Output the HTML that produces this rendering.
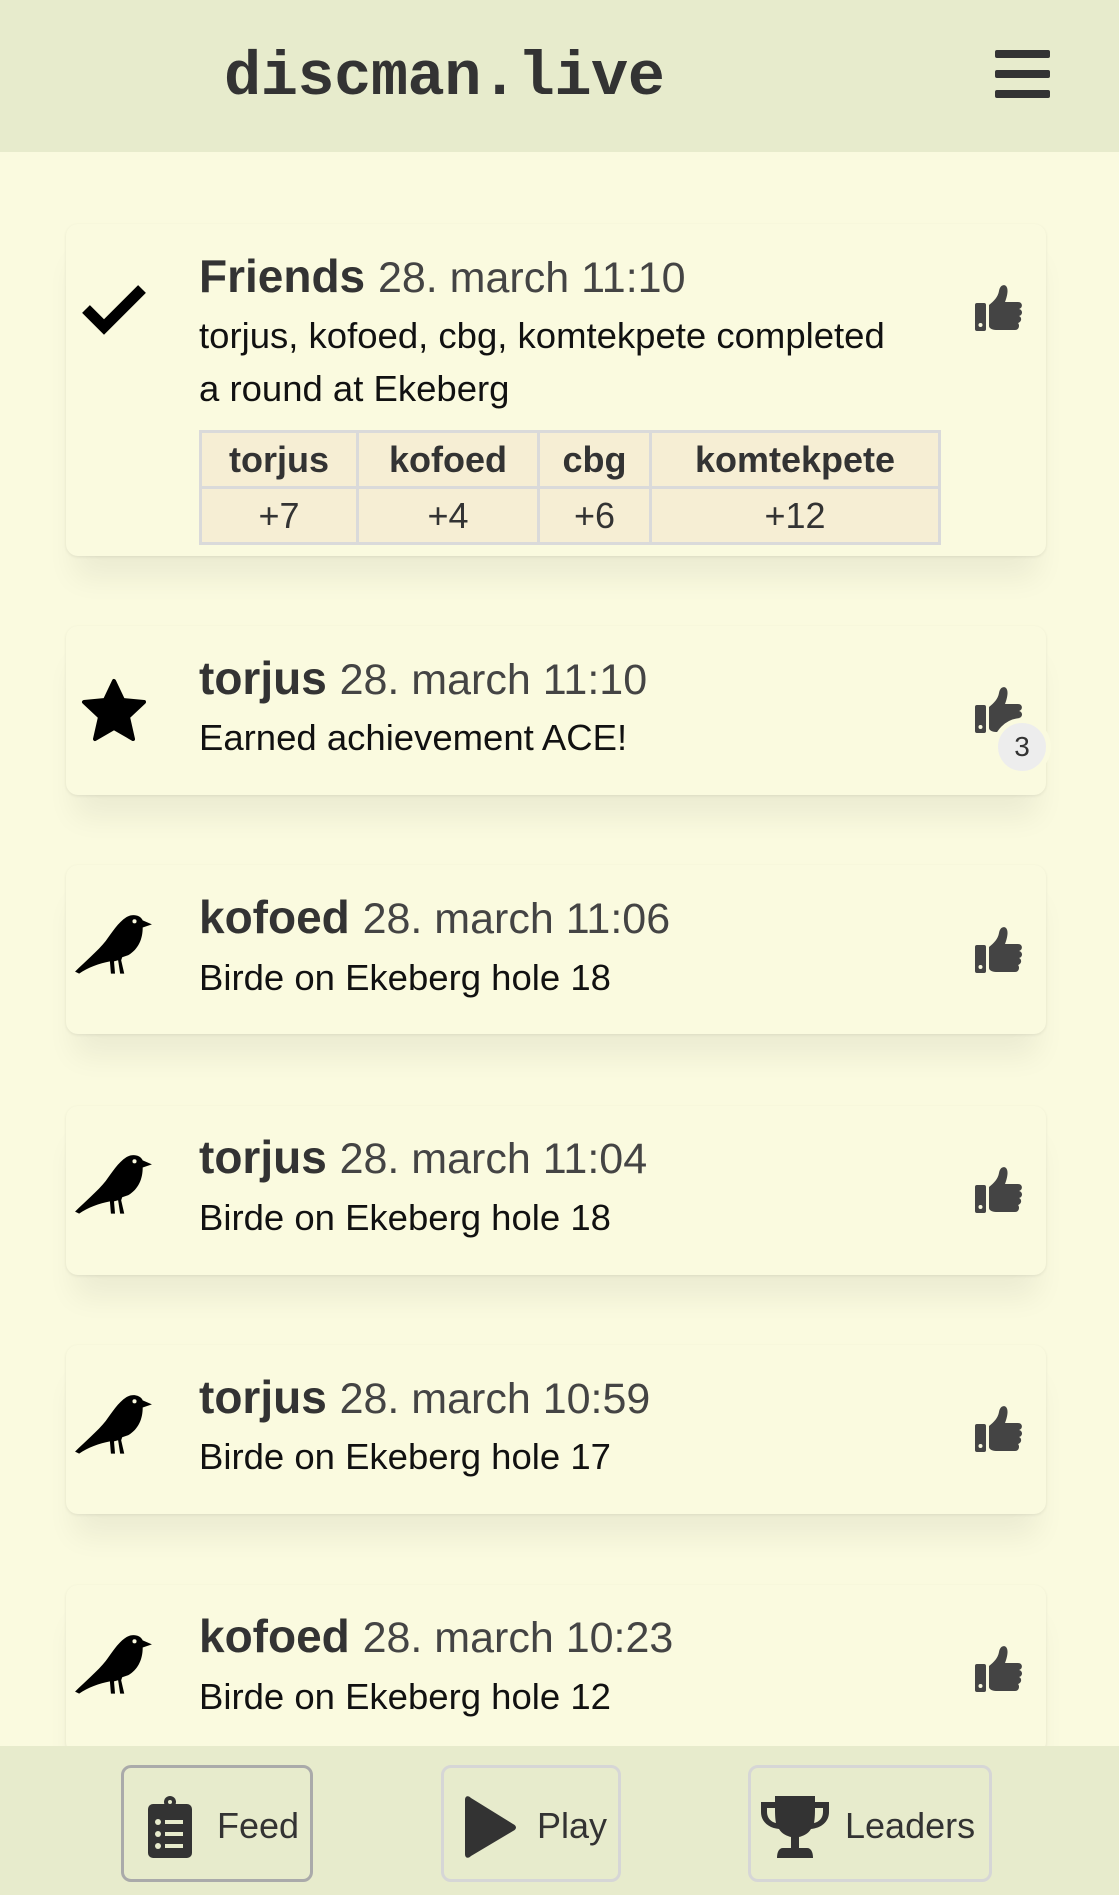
<!DOCTYPE html>
<html><head><meta charset="utf-8"><style>
*{margin:0;padding:0;box-sizing:border-box}
body{width:1119px;height:1895px;background:#fafadf;font-family:"Liberation Sans",sans-serif;position:relative;overflow:hidden;color:#111}
.hdr{position:absolute;left:0;top:0;width:1119px;height:152px;background:#e7ebcc}
.logo{position:absolute;left:224px;top:42px;font:bold 62px "Liberation Mono",monospace;color:#333;letter-spacing:-0.5px}
.ham{position:absolute;left:995px;width:55px;height:8px;background:#333;border-radius:2px}
.card{position:absolute;left:66px;width:980px;background:#fafadf;border-radius:12px;box-shadow:0 1px 3px rgba(0,0,0,.08),0 30px 30px -8px rgba(0,0,0,.06)}
.name{position:absolute;left:199px;font-size:46px;font-weight:bold;color:#333;white-space:nowrap}
.name span{font-weight:normal;font-size:43px;color:#444}
.txt{position:absolute;left:199px;font-size:36.5px;color:#111;line-height:53px;white-space:nowrap}
.ico{position:absolute}
table{position:absolute;left:199px;top:430px;border-collapse:collapse;font-size:36px;color:#333}
td,th{border:3px solid #dadada;background:#f6eed4;text-align:center;height:56px;padding:0}
.nav{position:absolute;left:0;top:1746px;width:1119px;height:149px;background:#e7ebcc}
.btn{position:absolute;top:1765px;height:117px;border:3px solid #d6d6d6;border-radius:10px;font-size:36px;color:#333}
.btn span{position:absolute;top:37px}
</style></head><body>
<div class="hdr"><div class="logo">discman.live</div>
<div class="ham" style="top:50px"></div><div class="ham" style="top:70px"></div><div class="ham" style="top:90px"></div></div>

<div class="card" style="top:224px;height:332px"></div>
<div class="card" style="top:626px;height:169px"></div>
<div class="card" style="top:865px;height:169px"></div>
<div class="card" style="top:1106px;height:169px"></div>
<div class="card" style="top:1345px;height:169px"></div>
<div class="card" style="top:1585px;height:169px"></div>

<svg class="ico" style="left:82px;top:283px" width="64" height="52" viewBox="0 0 64 52"><path d="M4 26 L22 44 L60 6" fill="none" stroke="#000" stroke-width="11" stroke-linejoin="miter"/></svg>
<div class="name" style="top:249px">Friends <span>28. march 11:10</span></div>
<div class="txt" style="top:309px">torjus, kofoed, cbg, komtekpete completed<br>a round at Ekeberg</div>
<table><tr><th style="width:157px">torjus</th><th style="width:181px">kofoed</th><th style="width:112px">cbg</th><th style="width:289px">komtekpete</th></tr>
<tr><td>+7</td><td>+4</td><td>+6</td><td>+12</td></tr></table>

<svg class="ico" style="left:80px;top:677px" width="68" height="66" viewBox="0 0 68 66"><path d="M34 4 L43 23 L64 25 L48 40 L53 62 L34 51 L15 62 L20 40 L4 25 L25 23 Z" fill="#000" stroke="#000" stroke-width="4" stroke-linejoin="round"/></svg>
<div class="name" style="top:651px">torjus <span>28. march 11:10</span></div>
<div class="txt" style="top:711px">Earned achievement ACE!</div>

<div class="name" style="top:890px">kofoed <span>28. march 11:06</span></div>
<div class="txt" style="top:951px">Birde on Ekeberg hole 18</div>
<div class="name" style="top:1130px">torjus <span>28. march 11:04</span></div>
<div class="txt" style="top:1191px">Birde on Ekeberg hole 18</div>
<div class="name" style="top:1370px">torjus <span>28. march 10:59</span></div>
<div class="txt" style="top:1430px">Birde on Ekeberg hole 17</div>
<div class="name" style="top:1609px">kofoed <span>28. march 10:23</span></div>
<div class="txt" style="top:1670px">Birde on Ekeberg hole 12</div>

<svg width="0" height="0" style="position:absolute"><defs>
<symbol id="bird" viewBox="0 0 80 70"><path d="M2 58 C12 48 24 38 32 28 C38 20 44 10 52 5 C58 1 66 3 68 8 L77 12 L68 15 C68 26 64 36 54 42 L48 44 L47 47 L50 60 L46 60 L44 47 L40 48 L41 60 L37 60 L36 48 C26 50 14 54 6 60 Z" fill="#000"/><circle cx="60" cy="9" r="2" fill="#fafadf"/></symbol>
<symbol id="thumb" viewBox="0 0 50 50"><rect x="1" y="20" width="11" height="28" rx="2" fill="#444"/><circle cx="6.5" cy="42" r="2" fill="#fafadf"/><path d="M15 22 C20 18 24 14 25 8 C26 2 30 1 32 3 C35 6 33 14 31 19 L44 19 C49 19 49 25 45 26 C49 27 49 32 45 33 C48 34 48 39 44 40 C46 42 45 47 41 47 L22 47 C18 47 15 45 15 43 Z" fill="#444"/></symbol>
</defs></svg>
<svg class="ico" style="left:73px;top:912px" width="82" height="72"><use href="#bird"/></svg>
<svg class="ico" style="left:73px;top:1152px" width="82" height="72"><use href="#bird"/></svg>
<svg class="ico" style="left:73px;top:1392px" width="82" height="72"><use href="#bird"/></svg>
<svg class="ico" style="left:73px;top:1632px" width="82" height="72"><use href="#bird"/></svg>

<svg class="ico" style="left:974px;top:283px" width="50" height="50"><use href="#thumb"/></svg>
<svg class="ico" style="left:974px;top:685px" width="50" height="50"><use href="#thumb"/></svg>
<svg class="ico" style="left:974px;top:925px" width="50" height="50"><use href="#thumb"/></svg>
<svg class="ico" style="left:974px;top:1165px" width="50" height="50"><use href="#thumb"/></svg>
<svg class="ico" style="left:974px;top:1404px" width="50" height="50"><use href="#thumb"/></svg>
<svg class="ico" style="left:974px;top:1644px" width="50" height="50"><use href="#thumb"/></svg>
<div style="position:absolute;left:993px;top:718px;width:58px;height:58px;border-radius:50%;background:#ededed;border:5px solid #fafadf;font-size:28px;color:#333;text-align:center;line-height:48px">3</div>

<div class="nav"></div>
<div class="btn" style="left:121px;width:192px;border-color:#aaa"><svg style="position:absolute;left:22px;top:28px" width="48" height="62" viewBox="0 0 48 62"><rect x="2" y="8" width="44" height="54" rx="5" fill="#333"/><circle cx="24" cy="6" r="6" fill="#333"/><circle cx="24" cy="6" r="2" fill="#e7ebcc"/><g fill="#e7ebcc"><circle cx="12" cy="26" r="3"/><circle cx="12" cy="38" r="3"/><circle cx="12" cy="50" r="3"/><rect x="19" y="24" width="18" height="4"/><rect x="19" y="36" width="18" height="4"/><rect x="19" y="48" width="18" height="4"/></g></svg><span style="left:93px">Feed</span></div>
<div class="btn" style="left:441px;width:180px"><svg style="position:absolute;left:16px;top:28px" width="58" height="62" viewBox="0 0 58 62"><path d="M5 4 C5 0 8 -1 11 2 L53 28 C57 30 57 33 53 35 L11 60 C8 63 5 62 5 58 Z" fill="#333"/></svg><span style="left:93px">Play</span></div>
<div class="btn" style="left:748px;width:244px"><svg style="position:absolute;left:8px;top:28px" width="72" height="64" viewBox="0 0 72 64"><path d="M16 0 H56 V6 H70 V16 C70 26 62 32 52 33 C49 38 44 40 40 41 V52 H48 C52 52 54 56 54 62 H18 C18 56 20 52 24 52 H32 V41 C28 40 23 38 20 33 C10 32 2 26 2 16 V6 H16 Z M8 12 V16 C8 22 12 26 17 27 C16 22 16 16 16 12 Z M64 12 H56 C56 16 56 22 55 27 C60 26 64 22 64 16 Z" fill="#333"/></svg><span style="left:94px">Leaders</span></div>
</body></html>
